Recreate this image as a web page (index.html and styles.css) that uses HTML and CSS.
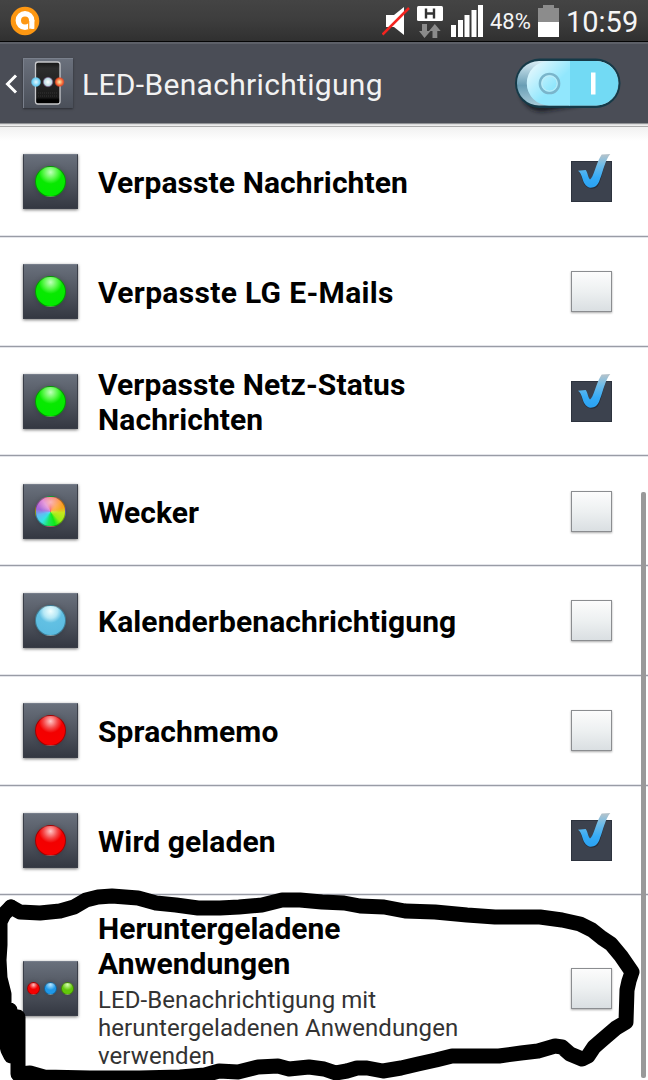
FILE: index.html
```html
<!DOCTYPE html>
<html lang="de">
<head>
<meta charset="utf-8">
<title>LED-Benachrichtigung</title>
<link rel="stylesheet" href="styles.css">
</head>
<body>
<svg class="defs" width="0" height="0" aria-hidden="true">
  <defs>
    <linearGradient id="tick" x1="0" y1="0" x2="0" y2="1">
      <stop offset="0" stop-color="#b9c3c9"/><stop offset=".3" stop-color="#74bde6"/><stop offset=".7" stop-color="#35abf7"/><stop offset="1" stop-color="#2ba2f2"/>
    </linearGradient>
    <symbol id="check" viewBox="0 0 44 52">
      <path d="M7 19.500C11 22 11 29 13.300 32.500Q20 40 26.500 34.500C30 30 31 20 34 13L18 29z" fill="#18202c" opacity=".6"/>
      <path d="M7 18.700L14.700 18C16.500 20 17 25.500 19 27.500C22.500 26 25 11 30.700 2.500L39.300 2C34 8 32 20 29 27C27 34 23.500 35.700 19.700 35.700Q16 35.700 13.300 31.300C11.500 28 10.500 20.500 7 18.700Z" fill="url(#tick)"/>
    </symbol>
  </defs>
</svg>
<div class="screen">
  <header class="status">
    <svg class="avast" viewBox="0 0 30 30">
      <circle cx="15" cy="15" r="14.300" fill="#fd9712"/>
      <circle cx="15" cy="14.500" r="6.700" fill="none" stroke="#fff" stroke-width="5.400"/>
      <path d="M19 14h5.400v8.700q-5.400 1.300-5.400-3z" fill="#fff"/>
      <path d="M18.700 15v8" stroke="#fd9712" stroke-width="1.200"/>
    </svg>
    <div class="status-right">
      <svg class="signals" viewBox="0 0 104 42">
        <path d="M4 15h8l10-8v28l-10-8H4z" fill="#fff"/>
        <path d="M.500 34.500L27 8" stroke="#f3241f" stroke-width="2.500"/>
        <rect x="35" y="6" width="26" height="15" rx="1.500" fill="#fff"/>
        <path d="M44 8.500v10M52 8.500v10M44 13.500h8" fill="none" stroke="#333" stroke-width="2.400"/>
        <path d="M40 24h5v7h3.500L42.500 38 37 31h3zM50.500 38v-7H47l5.800-7 5.900 7h-3.400v7z" fill="#8b8b8b"/>
        <path d="M69 25h5v12h-5zM76 20h5v17h-5zM82.500 15h5v22h-5zM89.500 10h5v27h-5zM96 5h5v32h-5z" fill="#fff"/>
      </svg>
      <span class="percent">48%</span>
      <svg class="battery" viewBox="0 0 22 34"><path d="M0 4h5V1h11v3h5v14H0z" fill="#8c8c8c"/><path d="M0 18h21v15H0z" fill="#fff"/></svg>
      <span class="clock">10:59</span>
    </div>
  </header>

  <nav class="bar">
    <svg class="back" viewBox="0 0 14 22"><path d="M12 2.500L3.500 11l8.500 8.500" fill="none" stroke="#fff" stroke-width="3"/></svg>
    <svg class="app" viewBox="0 0 50 50">
      <defs>
        <linearGradient id="appbg" x1="0" y1="0" x2="0" y2="1"><stop stop-color="#6b717d"/><stop offset="1" stop-color="#4a4f59"/></linearGradient>
        <linearGradient id="phone" x1="0" y1="0" x2="0" y2="1"><stop stop-color="#151515"/><stop offset=".15" stop-color="#2d2d2d"/><stop offset=".85" stop-color="#191919"/><stop offset=".9" stop-color="#000"/></linearGradient>
        <radialGradient id="ledb"><stop stop-color="#e2f8ff"/><stop offset=".75" stop-color="#69ccf3"/><stop offset="1" stop-color="#69ccf3" stop-opacity="0"/></radialGradient>
        <radialGradient id="ledw"><stop stop-color="#fff"/><stop offset=".7" stop-color="#bcdce4"/><stop offset="1" stop-color="#b87ed0" stop-opacity=".2"/></radialGradient>
        <radialGradient id="ledr"><stop stop-color="#fff0a8"/><stop offset=".7" stop-color="#f3562a"/><stop offset="1" stop-color="#e84425" stop-opacity="0"/></radialGradient>
      </defs>
      <rect width="50" height="50" fill="url(#appbg)"/><path d="M0 .500H50M.500 0V50" stroke="#7a808c"/>
      <rect x="12.500" y="4" width="24.500" height="42" rx="2.500" fill="url(#phone)" stroke="#c8c9cc" stroke-width="1.300"/>
      <path d="M15 35h20M15 38h20" stroke="#343434" stroke-dasharray="1 1"/>
      <circle cx="13" cy="24" r="5.300" fill="url(#ledb)"/><circle cx="25" cy="24" r="5.300" fill="url(#ledw)"/><circle cx="36.500" cy="24" r="5.300" fill="url(#ledr)"/>
    </svg>
    <h1 class="heading">LED-Benachrichtigung</h1>
    <svg class="switch" viewBox="0 0 110 60">
      <defs>
        <filter id="soft" x="-20%" y="-50%" width="140%" height="200%"><feGaussianBlur stdDeviation="2"/></filter>
        <linearGradient id="side" x1="0" y1="0" x2="0" y2="1"><stop stop-color="#d8edf5"/><stop offset=".55" stop-color="#699eb5"/><stop offset="1" stop-color="#a8cbd9"/></linearGradient>
        <linearGradient id="knob" x1="0" y1="0" x2=".6" y2=".6"><stop offset=".15" stop-color="#e5f8fd"/><stop offset="1" stop-color="#91e7fd"/></linearGradient>
      </defs>
      <path d="M6 38Q14 58 32 55L68 49 30 42z" fill="#16191d" opacity=".85" filter="url(#soft)"/>
      <rect x="1" y="2.500" width="105.500" height="49.500" rx="24.700" fill="#153a48"/>
      <rect x="3" y="5" width="101.500" height="44.500" rx="22" fill="url(#side)"/>
      <path d="M55 5h27a22.200 22.200 0 0 1 0 44.500H55z" fill="#72daf4"/>
      <path d="M56 5v44.500H35a22.200 22.200 0 0 1 0-44.500z" fill="url(#knob)"/>
      <circle cx="35.500" cy="27.500" r="9.600" fill="none" stroke="#7ab5cb" stroke-width="2.500"/><circle cx="35.500" cy="27.500" r="7.700" fill="none" stroke="#c2edf7"/>
      <rect x="77" y="16.500" width="4.500" height="22" fill="#fff"/>
    </svg>
  </nav>

  <main class="list">
    <section class="row"><span class="tile"><i class="led green"></i></span><h2 class="name">Verpasste Nachrichten</h2><span class="box on"><svg class="mark"><use href="#check"/></svg></span></section>
    <section class="row"><span class="tile"><i class="led green"></i></span><h2 class="name mails">Verpasste LG E-Mails</h2><span class="box"></span></section>
    <section class="row"><span class="tile"><i class="led green"></i></span><h2 class="name">Verpasste Netz-Status<br>Nachrichten</h2><span class="box on"><svg class="mark"><use href="#check"/></svg></span></section>
    <section class="row"><span class="tile"><i class="led rainbow"></i></span><h2 class="name">Wecker</h2><span class="box"></span></section>
    <section class="row"><span class="tile"><i class="led blue"></i></span><h2 class="name">Kalenderbenachrichtigung</h2><span class="box"></span></section>
    <section class="row"><span class="tile"><i class="led red"></i></span><h2 class="name">Sprachmemo</h2><span class="box"></span></section>
    <section class="row"><span class="tile"><i class="led red"></i></span><h2 class="name">Wird geladen</h2><span class="box on"><svg class="mark"><use href="#check"/></svg></span></section>
    <section class="row tall"><span class="tile trio"><i class="led red"></i><i class="led azure"></i><i class="led lime"></i></span>
      <div class="copy"><h2 class="name">Heruntergeladene<br>Anwendungen</h2><p class="sub">LED-Benachrichtigung mit<br>heruntergeladenen Anwendungen<br>verwenden</p></div><span class="box"></span></section>
  </main>
  <div class="scrollbar"></div>
  <svg class="scribble" viewBox="0 880 648 200">
    <g fill="none" stroke="#000" stroke-width="15" stroke-linecap="round" stroke-linejoin="round">
      <path d="M11 907L20 912 40 913 60 911 74 907 86 900 98 897 112 896 138 898 156 903 176 905 198 908 220 908 239 907 262 905 282 900 300 900 322 902 344 903 360 906 384 907 405 911 435 912 467 915 495 917 517 917 540 917 562 920 580 924 592 930 602 938 611 944 621 956 632 972 629 981 627 990 626 1022 616 1028 602 1040 594 1047 588 1056 582 1059 570 1054 562 1047 555 1046 538 1051 521 1053 499 1056 480 1056 452 1056 436 1060 418 1064 401 1068 383 1071 367 1068 357 1068 347 1071 336 1073 324 1069 309 1067 289 1069 278 1066 258 1067 246 1070 238 1072 219 1071 205 1075 180 1077 140 1078 90 1078 44 1077 30 1073 19 1074"/>
      <path d="M11 907L4 914 0 922 0 945 -1 960 0 978 4 994 4 1010 3 1030 8 1050 11 1056M18 1017L18 1074 21 1077M10 1010L12 1050"/>
    </g>
  </svg>
</div>
</body>
</html>
```
FILE: styles.css
```css
* { box-sizing: border-box; }
body { margin: 0; font-family: Roboto, "Noto Sans", sans-serif; background: #fff; }
h1, h2, p { margin: 0; }
svg { display: block; flex: none; }
.defs { position: absolute; }
.screen { position: relative; width: 648px; height: 1080px; overflow: hidden; }
.status { height: 42px; display: flex; justify-content: space-between; background: linear-gradient(#444, #3d3d3d 50%, #303030); border-bottom: 1px solid #050505; padding: 0 11px 0 10px; }
.avast { width: 30px; height: 30px; margin-top: 6px; }
.status-right { display: flex; align-items: flex-start; color: #f5f5f5; }
.signals { width: 104px; height: 42px; }
.percent { width: 42px; margin-left: 4px; font-size: 22px; line-height: 44px; white-space: nowrap; }
.battery { width: 22px; height: 34px; margin: 4px 0 0 6px; }
.clock { width: 71px; margin-left: 6px; font-size: 29px; line-height: 45px; white-space: nowrap; }
.bar { height: 85px; display: flex; align-items: flex-start; background: #4a4d56; border-top: 2px solid #5d6068; box-shadow: inset 0 -1px #aaa, inset 0 -2px #eee, inset 0 -3px #ddd, inset 0 -4px #929497; padding: 14px 24px 0 4px; }
.back { width: 14px; height: 22px; margin-top: 15px; }
.app { width: 50px; height: 50px; margin-left: 5px; box-shadow: 0 1px 2px #2b2d32; }
.heading { flex: 1; margin-left: 9px; font-size: 30px; font-weight: 400; line-height: 54px; letter-spacing: .32px; color: #f2f2f2; white-space: nowrap; }
.switch { width: 110px; height: 60px; margin-top: -2px; }
.list { background: linear-gradient(#f1f1f1, #fff 14px); }
.row { height: 109.750px; display: flex; align-items: center; padding: 1px 36px 0 23px; border-bottom: 1px solid #999ca6; box-shadow: 0 1px #e4e5ea, inset 0 -1px #e4e5ea; }
.row.tall { height: 186px; border: 0; box-shadow: none; }
.tile { flex: none; width: 55px; height: 55px; display: flex; align-items: center; justify-content: center; background: linear-gradient(#69707c, #50555f 50%, #343842); border: 1px solid #3a3e48; border-top-color: #777e8b; box-shadow: 0 1px 3px #777; }
.led { width: 31px; height: 31px; border-radius: 50%; border: 1px solid #0005; box-shadow: 0 0 5px #0003; }
.green { background: radial-gradient(circle at 50% 18%, #c2ffbd, #55f846 25%, #08e900 42%, #00ea00); }
.red { background: radial-gradient(circle at 50% 18%, #ffc8c8, #f54848 25%, #f30000 42%, #f90000); }
.blue { background: radial-gradient(circle at 50% 18%, #f1ffff, #b5e8f6 25%, #62c0e3 42%, #58b9df); }
.rainbow { background: radial-gradient(circle at 50% 18%, #fff9, #fff0 45%), conic-gradient(#f34b50, #ff8f21 45deg, #f4a91d 75deg, #c8e61e 95deg, #95ef17 135deg, #10e819 160deg, #1be75f 190deg, #36e4e5 220deg, #66b9f4 255deg, #a269dc 280deg, #db70cc 325deg, #f34b50); }
.trio { gap: 4px; }
.trio .led { flex: none; width: 13px; height: 13px; margin-bottom: 1px; }
.azure { background: radial-gradient(circle at 50% 15%, #b8e8ff, #2098e8 50%); }
.lime { background: radial-gradient(circle at 50% 15%, #d7ffb0, #62c80a 50%); }
.name { flex: 1; margin-left: 20px; font-size: 30px; font-weight: 700; line-height: 35px; letter-spacing: .1px; color: #000; white-space: nowrap; padding-top: 2px; }
.mails { letter-spacing: .33px; }
.copy { flex: 1; padding-top: 4px; }
.copy .name { padding-top: 0; letter-spacing: 0; }
.sub { margin: 5px 0 0 20px; font-size: 24px; line-height: 28px; letter-spacing: .08px; color: #333; white-space: nowrap; }
.box { position: relative; flex: none; width: 41px; height: 41px; border: 1px solid #8b8d90; background: linear-gradient(#fcfcfc, #edf0f1 50%, #dadfe2); box-shadow: 0 1px 2px #aaa; }
.box.on { background: #3c424e; border-color: #2d333e; box-shadow: none; }
.mark { position: absolute; left: -1px; top: -10px; width: 44px; height: 52px; }
.scrollbar { position: absolute; left: 641px; top: 492px; width: 5px; height: 586px; border-radius: 2px; background: #999; }
.scribble { position: absolute; left: 0; top: 880px; width: 648px; height: 200px; }
```
